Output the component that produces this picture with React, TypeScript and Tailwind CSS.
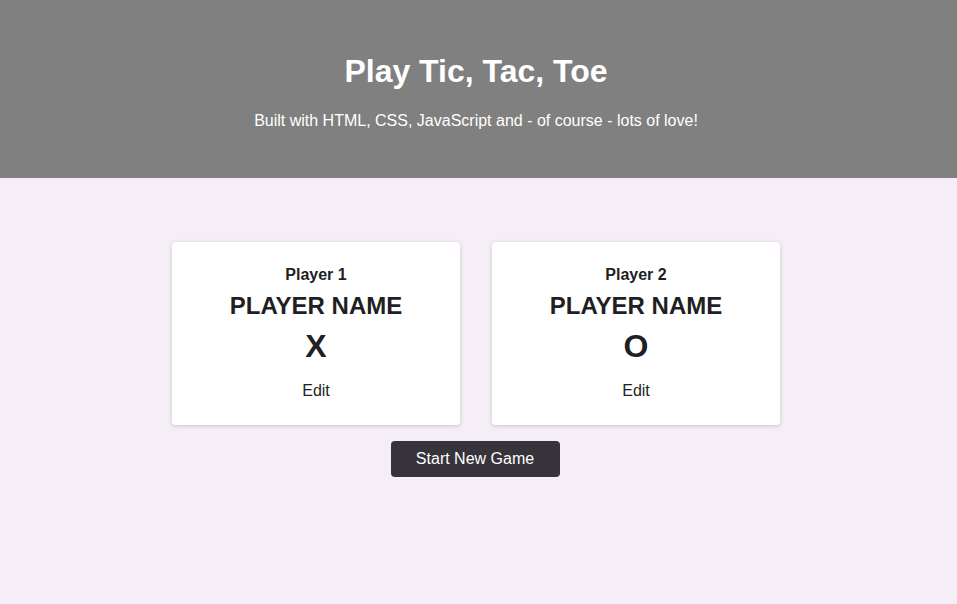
import React from 'react';

const players = [
  { label: 'Player 1', symbol: 'X' },
  { label: 'Player 2', symbol: 'O' },
];

const App: React.FC = () => {
  return (
    <div className="min-h-screen bg-[#f5eef6] font-['Liberation_Sans',Arial,sans-serif] text-[#211f23]">
      <header className="bg-[#808080] pt-[51px] pb-[45px] pr-[5px] text-center text-white">
        <h1 className="text-[32px] leading-[40px] font-bold">Play Tic, Tac, Toe</h1>
        <p className="mt-[18px] text-base leading-6">
          Built with HTML, CSS, JavaScript and - of course - lots of love!
        </p>
      </header>
      <main className="flex flex-col items-center pt-16 pr-[5px]">
        <ol className="flex gap-8">
          {players.map((p) => (
            <li
              key={p.label}
              className="w-[288px] h-[183px] bg-white rounded-[4px] shadow-[0_1px_4px_rgba(0,0,0,0.18)] pt-[21px] flex flex-col items-center text-center"
            >
              <h2 className="text-base leading-6 font-bold">{p.label}</h2>
              <h3 className="mt-[3px] text-2xl leading-8 font-bold">PLAYER NAME</h3>
              <p className="mt-1 text-[32px] leading-10 font-bold">{p.symbol}</p>
              <button className="mt-[13px] text-base leading-6">Edit</button>
            </li>
          ))}
        </ol>
        <button className="mt-4 mr-[2px] w-[169px] h-9 rounded-[4px] bg-[#37333b] text-white text-base">
          Start New Game
        </button>
      </main>
    </div>
  );
};

export default App;
